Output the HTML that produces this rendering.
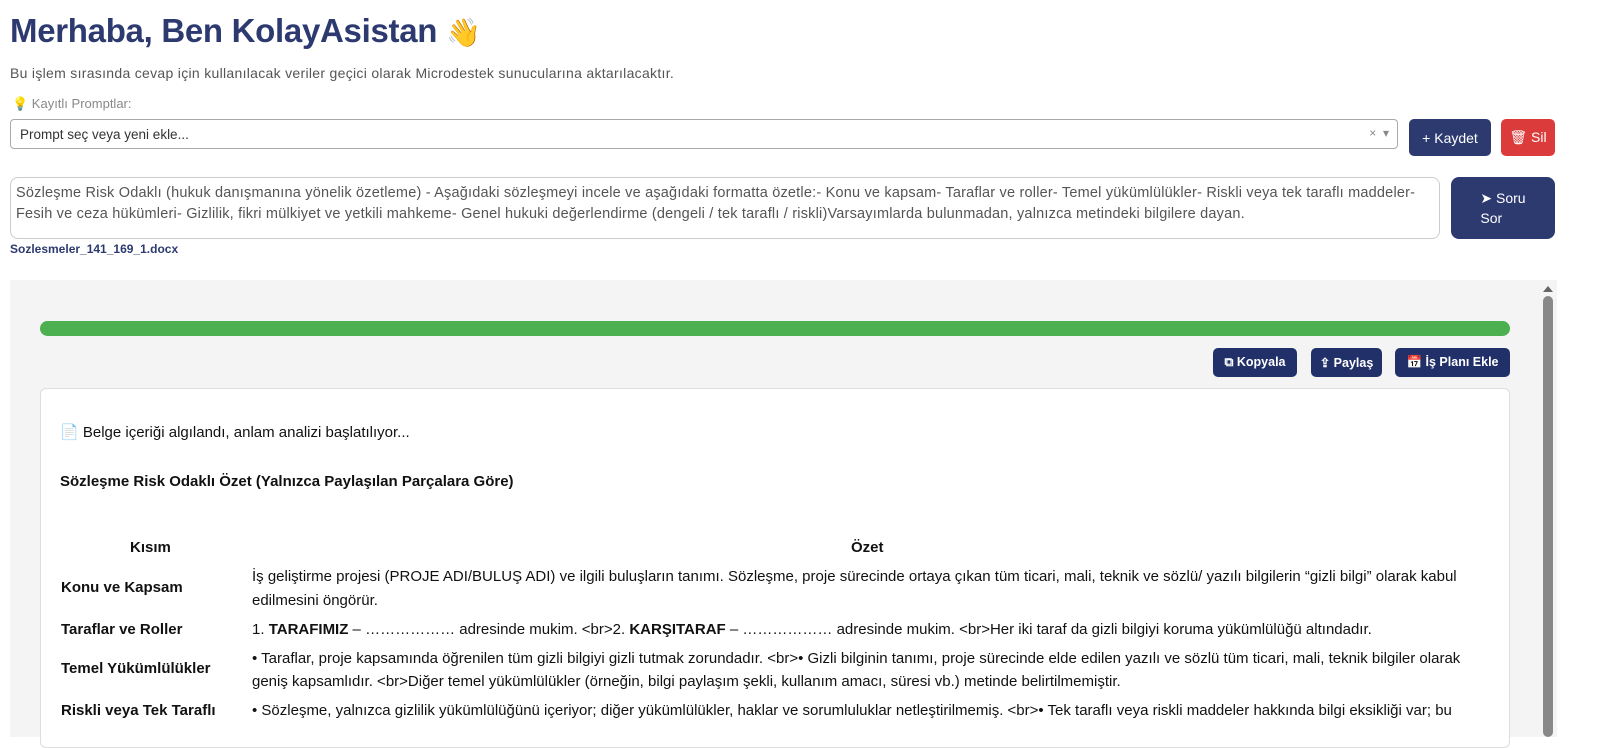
<!DOCTYPE html>
<html><head><meta charset="utf-8"><style>
*{box-sizing:border-box;margin:0;padding:0}
body{width:1597px;height:737px;overflow:hidden;background:#fff;font-family:"Liberation Sans",sans-serif;position:relative;color:#333}
.a{position:absolute;white-space:nowrap}
h1{position:absolute;left:10px;top:12px;font-size:33px;font-weight:bold;color:#2c3a70;letter-spacing:-0.3px}
.btn{position:absolute;background:#2c3a70;color:#fff;border-radius:5px;font-size:14px;display:flex;align-items:center;justify-content:center}
.sb{position:absolute;background:#213068;color:#fff;border-radius:5px;font-size:12.5px;font-weight:bold;display:flex;align-items:center;justify-content:center;height:29px;top:348px}
.r{position:absolute;font-size:15px;color:#111;white-space:nowrap}
.k{position:absolute;font-size:15px;font-weight:bold;color:#111;left:61px;white-space:nowrap}
</style></head><body>
<h1>Merhaba, Ben KolayAsistan <span style="font-size:28px">👋</span></h1>
<div class="a" style="left:10px;top:65px;font-size:14px;letter-spacing:0.3px;color:#555">Bu işlem sırasında cevap için kullanılacak veriler geçici olarak Microdestek sunucularına aktarılacaktır.</div>
<div class="a" style="left:12px;top:96px;font-size:13px;color:#888"><span style="color:#f0b400">💡</span> Kayıtlı Promptlar:</div>
<div class="a" style="left:10px;top:119px;width:1388px;height:30px;border:1px solid #aaa;border-radius:4px;font-size:13.5px;color:#333;padding:7px 9px">Prompt seç veya yeni ekle...<span style="position:absolute;right:8px;top:6px;color:#888;font-size:12px">×&nbsp; ▾</span></div>
<div class="btn" style="left:1409px;top:119px;width:82px;height:37px">+ Kaydet</div>
<div class="btn" style="left:1501px;top:119px;width:54px;height:37px;background:#dc3b3b">🗑 Sil</div>
<div class="a" style="left:10px;top:177px;width:1430px;height:62px;border:1px solid #ccc;border-radius:8px;padding:5px 5px;font-size:14.5px;letter-spacing:0.2px;color:#555;line-height:21px;overflow:hidden">Sözleşme Risk Odaklı (hukuk danışmanına yönelik özetleme) - Aşağıdaki sözleşmeyi incele ve aşağıdaki formatta özetle:- Konu ve kapsam- Taraflar ve roller- Temel yükümlülükler- Riskli veya tek taraflı maddeler-<br>Fesih ve ceza hükümleri- Gizlilik, fikri mülkiyet ve yetkili mahkeme- Genel hukuki değerlendirme (dengeli / tek taraflı / riskli)Varsayımlarda bulunmadan, yalnızca metindeki bilgilere dayan.</div>
<div class="btn" style="left:1451px;top:177px;width:104px;height:62px;border-radius:8px;flex-direction:column;line-height:20px">➤ Soru<br>Sor</div>
<div class="a" style="left:10px;top:242px;font-size:12px;font-weight:bold;color:#2c3a70">Sozlesmeler_141_169_1.docx</div>
<div class="a" style="left:10px;top:280px;width:1530px;height:457px;background:#f4f4f4"></div>
<div class="a" style="left:1540px;top:280px;width:17px;height:457px;background:#f4f4f4"></div>
<div class="a" style="left:1543px;top:286px;width:0;height:0;border-left:5px solid transparent;border-right:5px solid transparent;border-bottom:6px solid #666"></div>
<div class="a" style="left:1543px;top:296px;width:10px;height:441px;background:#888;border-radius:5px"></div>
<div class="a" style="left:40px;top:321px;width:1470px;height:15px;background:#4caf50;border-radius:8px"></div>
<div class="sb" style="left:1213px;width:84px">⧉ Kopyala</div>
<div class="sb" style="left:1311px;width:71px">⇪ Paylaş</div>
<div class="sb" style="left:1395px;width:115px">📅 İş Planı Ekle</div>
<div class="a" style="left:40px;top:388px;width:1470px;height:360px;background:#fff;border:1px solid #ddd;border-radius:6px"></div>
<div class="r" style="left:60px;top:423px">📄 Belge içeriği algılandı, anlam analizi başlatılıyor...</div>
<div class="r" style="left:60px;top:473px;font-weight:bold">Sözleşme Risk Odaklı Özet (Yalnızca Paylaşılan Parçalara Göre)</div>
<div class="r" style="left:130px;top:539px;font-weight:bold">Kısım</div>
<div class="r" style="left:851px;top:539px;font-weight:bold">Özet</div>
<div class="k" style="top:579px">Konu ve Kapsam</div>
<div class="r" style="left:252px;top:568px">İş geliştirme projesi (PROJE ADI/BULUŞ ADI) ve ilgili buluşların tanımı. Sözleşme, proje sürecinde ortaya çıkan tüm ticari, mali, teknik ve sözlü/ yazılı bilgilerin “gizli bilgi” olarak kabul</div>
<div class="r" style="left:252px;top:592px">edilmesini öngörür.</div>
<div class="k" style="top:621px">Taraflar ve Roller</div>
<div class="r" style="left:252px;top:621px">1. <b>TARAFIMIZ</b> – ……………… adresinde mukim. &lt;br&gt;2. <b>KARŞITARAF</b> – ……………… adresinde mukim. &lt;br&gt;Her iki taraf da gizli bilgiyi koruma yükümlülüğü altındadır.</div>
<div class="k" style="top:660px">Temel Yükümlülükler</div>
<div class="r" style="left:252px;top:650px">• Taraflar, proje kapsamında öğrenilen tüm gizli bilgiyi gizli tutmak zorundadır. &lt;br&gt;• Gizli bilginin tanımı, proje sürecinde elde edilen yazılı ve sözlü tüm ticari, mali, teknik bilgiler olarak</div>
<div class="r" style="left:252px;top:673px">geniş kapsamlıdır. &lt;br&gt;Diğer temel yükümlülükler (örneğin, bilgi paylaşım şekli, kullanım amacı, süresi vb.) metinde belirtilmemiştir.</div>
<div class="k" style="top:702px">Riskli veya Tek Taraflı</div>
<div class="r" style="left:252px;top:702px">• Sözleşme, yalnızca gizlilik yükümlülüğünü içeriyor; diğer yükümlülükler, haklar ve sorumluluklar netleştirilmemiş. &lt;br&gt;• Tek taraflı veya riskli maddeler hakkında bilgi eksikliği var; bu</div>
</body></html>
